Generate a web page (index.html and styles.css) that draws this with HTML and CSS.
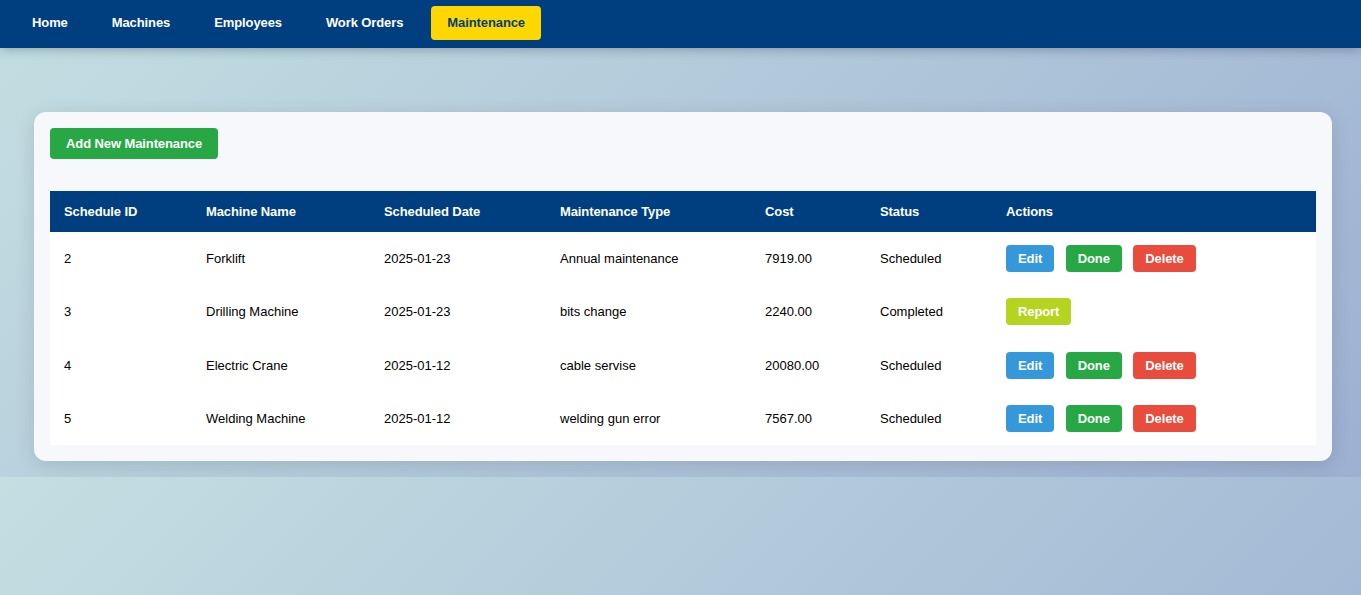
FILE: index.html
```html
<!DOCTYPE html>
<html lang="en">
<head>
<meta charset="utf-8">
<title>Maintenance</title>
<link rel="stylesheet" href="styles.css">
</head>
<body>
<nav class="navbar">
  <a class="nav-link" href="#">Home</a>
  <a class="nav-link" href="#">Machines</a>
  <a class="nav-link" href="#">Employees</a>
  <a class="nav-link" href="#">Work Orders</a>
  <a class="nav-link active" href="#">Maintenance</a>
</nav>
<main class="page">
  <section class="card">
    <button class="btn btn-add">Add New Maintenance</button>
    <table class="data-table">
      <thead>
        <tr>
          <th class="c-id">Schedule ID</th>
          <th class="c-name">Machine Name</th>
          <th class="c-date">Scheduled Date</th>
          <th class="c-type">Maintenance Type</th>
          <th class="c-cost">Cost</th>
          <th class="c-status">Status</th>
          <th class="c-actions">Actions</th>
        </tr>
      </thead>
      <tbody>
        <tr>
          <td>2</td><td>Forklift</td><td>2025-01-23</td><td>Annual maintenance</td><td>7919.00</td><td>Scheduled</td>
          <td><div class="actions"><button class="btn btn-edit">Edit</button><button class="btn btn-done">Done</button><button class="btn btn-delete">Delete</button></div></td>
        </tr>
        <tr>
          <td>3</td><td>Drilling Machine</td><td>2025-01-23</td><td>bits change</td><td>2240.00</td><td>Completed</td>
          <td><div class="actions"><button class="btn btn-report">Report</button></div></td>
        </tr>
        <tr>
          <td>4</td><td>Electric Crane</td><td>2025-01-12</td><td>cable servise</td><td>20080.00</td><td>Scheduled</td>
          <td><div class="actions"><button class="btn btn-edit">Edit</button><button class="btn btn-done">Done</button><button class="btn btn-delete">Delete</button></div></td>
        </tr>
        <tr>
          <td>5</td><td>Welding Machine</td><td>2025-01-12</td><td>welding gun error</td><td>7567.00</td><td>Scheduled</td>
          <td><div class="actions"><button class="btn btn-edit">Edit</button><button class="btn btn-done">Done</button><button class="btn btn-delete">Delete</button></div></td>
        </tr>
      </tbody>
    </table>
  </section>
</main>
</body>
</html>
```

FILE: styles.css
```css
* { box-sizing: border-box; }

body {
  margin: 0;
  font-family: "Liberation Sans", Arial, sans-serif;
  font-size: 13px;
  color: #000;
  background: linear-gradient(135deg, #c3dfe2 0%, #9db0d2 100%);
}

.navbar {
  height: 48px;
  background: #003f7f;
  display: flex;
  align-items: flex-start;
  gap: 12px;
  padding: 6px 16px 0;
  box-shadow: 0 2px 10px rgba(0, 0, 0, 0.25);
  position: relative;
}

.nav-link {
  display: block;
  height: 34px;
  line-height: 34px;
  padding: 0 16px;
  color: #fff;
  font-weight: bold;
  letter-spacing: -0.1px;
  text-decoration: none;
  border-radius: 4px;
}

.nav-link.active {
  background: #ffd700;
  color: #003f7f;
}

.page {
  padding: 64px 29px 16px 34px;
}

.card {
  background: #f6f8fb;
  border-radius: 12px;
  padding: 16px;
  box-shadow: 0 4px 20px rgba(0, 0, 0, 0.12);
}

.btn {
  font-family: "Liberation Sans", Arial, sans-serif;
  font-size: 13px;
  font-weight: bold;
  letter-spacing: -0.1px;
  color: #fff;
  border: none;
  border-radius: 4px;
  line-height: 15px;
  padding: 6px 12px;
  cursor: pointer;
}

.btn-add {
  display: block;
  background: #28a745;
  padding: 8px 16px;
  margin-bottom: 32px;
}

.data-table {
  width: 100%;
  border-collapse: collapse;
  background: #fff;
}

.data-table th {
  background: #003f7f;
  color: #fff;
  font-weight: bold;
  letter-spacing: -0.1px;
  text-align: left;
  padding: 13px 14px;
  line-height: 15px;
}

.data-table td {
  padding: 0 14px;
  height: 53.3px;
  line-height: 15px;
  vertical-align: middle;
}

.c-id { width: 142px; }
.c-name { width: 178px; }
.c-date { width: 176px; }
.c-type { width: 205px; }
.c-cost { width: 115px; }
.c-status { width: 126px; }

.actions {
  display: flex;
  gap: 11.5px;
}

.btn-edit { background: #3498db; }
.btn-done { background: #28a745; }
.btn-delete { background: #e74c3c; }
.btn-report { background: #b5d41f; }
```
